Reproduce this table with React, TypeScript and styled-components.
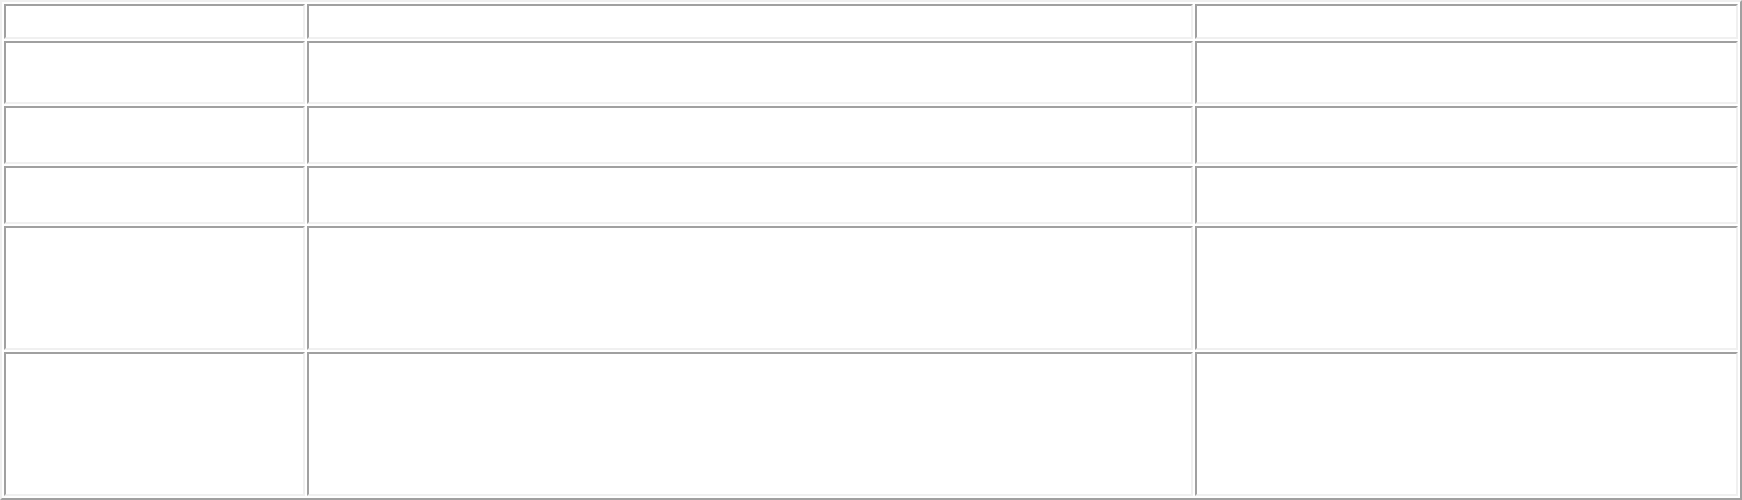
import React from "react";
import styled, { createGlobalStyle } from "styled-components";

const GlobalStyle = createGlobalStyle`
  html, body {
    margin: 0;
    padding: 0;
    background: #ffffff;
    font-family: "Liberation Serif", serif;
  }
  *, *::before, *::after { box-sizing: border-box; }
`;

const Table = styled.div`
  display: grid;
  grid-template-columns: 301px 886px 543px;
  grid-template-rows: 35px 63px 58px 58px 124px 144px;
  gap: 2px;
  padding: 2px;
  width: 1742px;
  height: 500px;
  border-style: solid;
  border-width: 2px;
  border-color: #f0f0f0 #a0a0a0 #a0a0a0 #f0f0f0;
  background: #ffffff;
`;

const Cell = styled.div`
  border-style: solid;
  border-width: 2px;
  border-color: #a0a0a0 #f0f0f0 #f0f0f0 #a0a0a0;
  background: #ffffff;
`;

const ROWS = 6;
const COLS = 3;

export default function App() {
  const cells: React.ReactNode[] = [];
  for (let r = 0; r < ROWS; r++) {
    for (let c = 0; c < COLS; c++) {
      cells.push(<Cell key={`${r}-${c}`} role="cell" />);
    }
  }
  return (
    <>
      <GlobalStyle />
      <Table role="table">{cells}</Table>
    </>
  );
}
